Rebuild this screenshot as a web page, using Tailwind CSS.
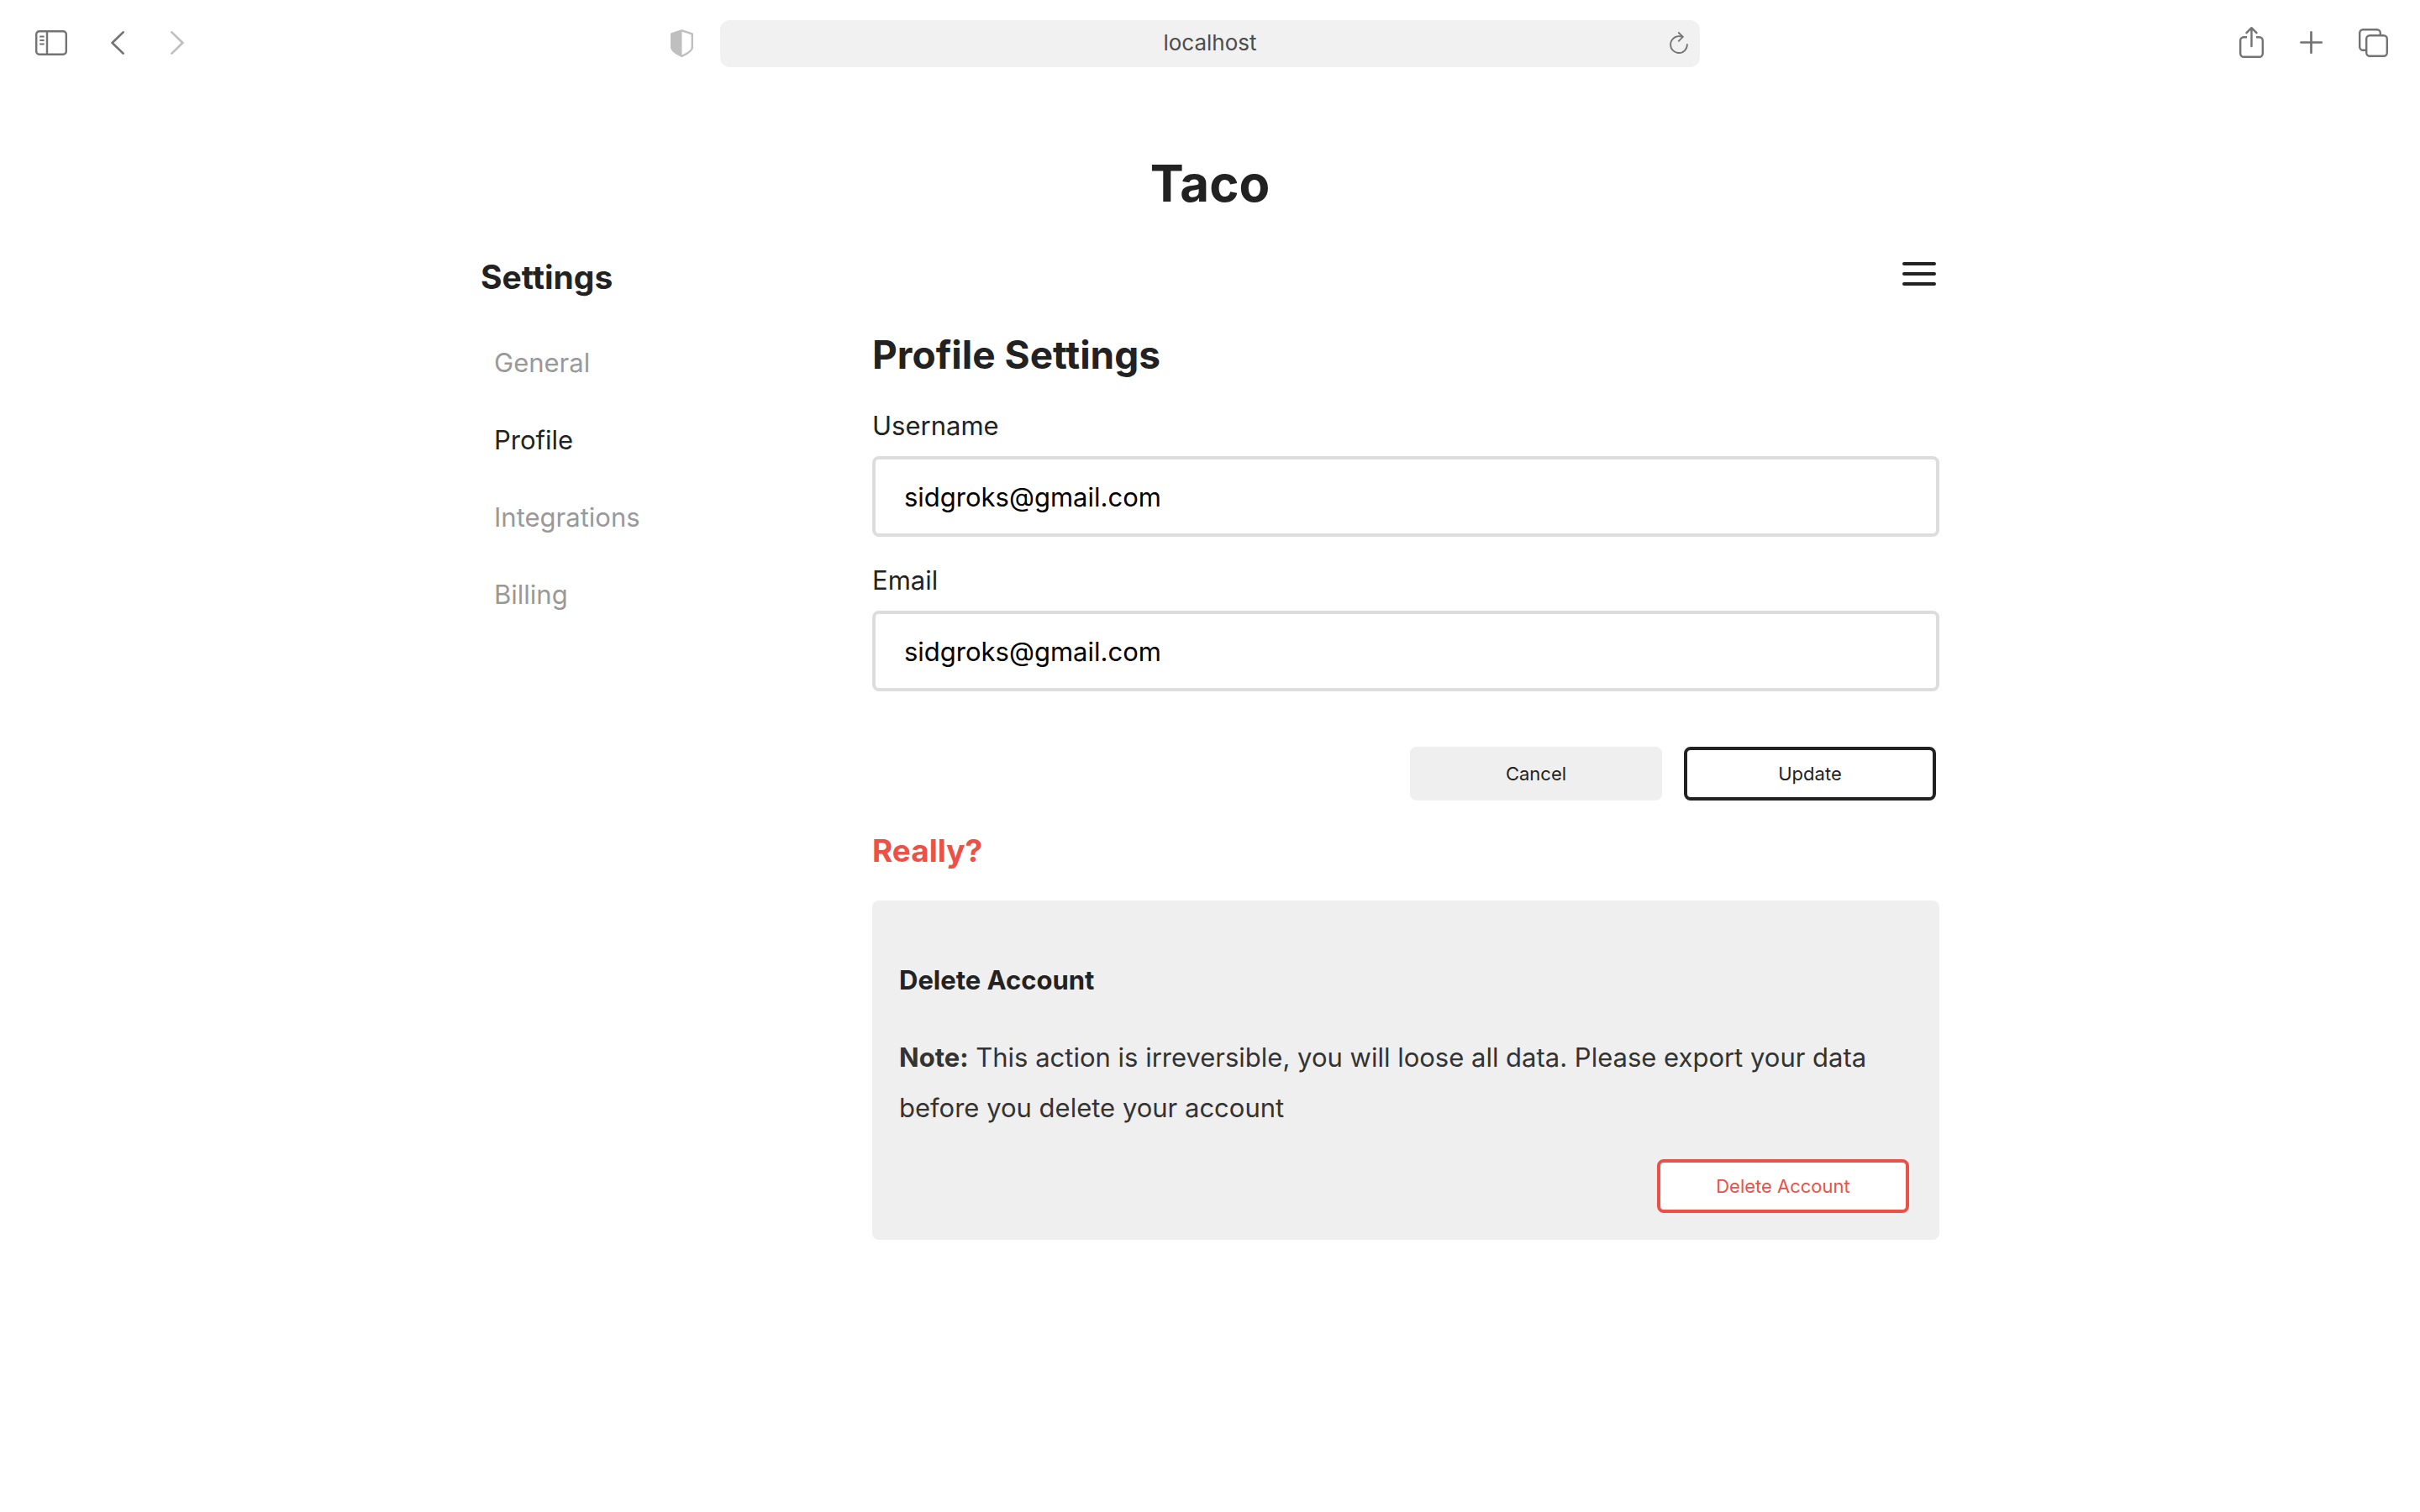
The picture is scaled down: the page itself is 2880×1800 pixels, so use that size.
<!DOCTYPE html>
<html lang="en">
<head>
<meta charset="utf-8">
<meta name="viewport" content="width=device-width, initial-scale=1">
<title>Taco – Profile Settings</title>
<script src="https://cdn.jsdelivr.net/npm/@tailwindcss/browser@4"></script>
</head>
<body class="min-h-screen bg-white font-['Inter',sans-serif] text-[#222222]">

<!-- Browser toolbar -->
<header class="grid grid-cols-[minmax(0,1fr)_40.5%_minmax(0,1fr)] items-center pt-6 text-[#737373]">
  <div class="flex items-center pr-8 pb-[2px] pl-[42px]">
    <button type="button" aria-label="Toggle sidebar">
      <svg class="block h-[30px] w-[38px]" viewBox="0 0 38 30" fill="none" stroke="currentColor" stroke-width="2.4" stroke-linecap="round">
        <rect x="1.2" y="1.2" width="35.6" height="27.6" rx="3.6"/>
        <path d="M14 1.5v27"/>
        <path d="M6 7.5h4M6 12h4M6 16.5h4" stroke-width="1.8"/>
      </svg>
    </button>
    <button type="button" aria-label="Back" class="ml-[52px]">
      <svg class="block h-7 w-4" viewBox="0 0 16 28" fill="none" stroke="currentColor" stroke-width="2.7" stroke-linecap="round" stroke-linejoin="round"><path d="M14.6 1.4 1.6 14l13 12.6"/></svg>
    </button>
    <button type="button" aria-label="Forward" class="ml-[55px] text-[#bfbfbf]">
      <svg class="block h-7 w-4" viewBox="0 0 16 28" fill="none" stroke="currentColor" stroke-width="2.7" stroke-linecap="round" stroke-linejoin="round"><path d="M1.4 1.4 14.4 14l-13 12.6"/></svg>
    </button>
    <button type="button" aria-label="Privacy report" class="ml-auto text-[#bfbfbf]">
      <svg class="block h-[33px] w-[27px]" viewBox="0 0 27 33" fill="none" stroke="currentColor" stroke-width="2.4" stroke-linejoin="round">
        <path d="M13.5 1.3 25.8 5.4v16.2c0 4.2-5.8 7.4-12.3 10.2C7 29 1.2 25.8 1.2 21.6V5.4z"/>
        <path d="M13.5 1.3v30.5C7 29 1.2 25.8 1.2 21.6V5.4z" fill="currentColor" stroke="none"/>
      </svg>
    </button>
  </div>
  <div class="grid h-14 grid-cols-[1fr_auto_1fr] items-center rounded-xl bg-[#f1f1f1] px-[14px] pb-[3px]">
    <span></span>
    <span class="text-[26px] leading-8 text-[#4c4c4c]">localhost</span>
    <button type="button" aria-label="Reload" class="justify-self-end">
      <svg class="block h-[26px] w-[22px]" viewBox="0 0 22 26" fill="none" stroke="currentColor" stroke-width="1.8" stroke-linecap="round" stroke-linejoin="round">
        <path d="M20.9 15A9.9 9.9 0 1 1 11 5.2c1.7 0 3.1.2 4.5.6"/>
        <path d="M10.8 1l5 4.9-5 5"/>
      </svg>
    </button>
  </div>
  <div class="flex items-center justify-end pr-[38px] pb-[2px]">
    <button type="button" aria-label="Share">
      <svg class="block h-[42px] w-[29px]" viewBox="0 0 29 42" fill="none" stroke="currentColor" stroke-width="2.4" stroke-linecap="round" stroke-linejoin="round">
        <path d="M9 14.2H5.2a4 4 0 0 0-4 4V33.8a4 4 0 0 0 4 4H23.8a4 4 0 0 0 4-4V18.2a4 4 0 0 0-4-4H20" stroke-linecap="butt"/>
        <path d="M14.5 25V3.5M8.500 9.2l6-6 6 6"/>
      </svg>
    </button>
    <button type="button" aria-label="New tab" class="ml-[43px]">
      <svg class="block h-[28px] w-[27px]" viewBox="0 0 27 28" fill="none" stroke="currentColor" stroke-width="2.7" stroke-linecap="round"><path d="M13.5 1.4v24.4M1.4 13.5h24.4"/></svg>
    </button>
    <button type="button" aria-label="Show tabs" class="ml-[43px]">
      <svg class="block h-[34px] w-[35px]" viewBox="0 0 35 34" fill="none" stroke="currentColor" stroke-width="2.4">
        <rect x="9.2" y="8.2" width="24.6" height="24.6" rx="4"/>
        <path d="M9 25.8H5.2a4 4 0 0 1-4-4V5.2a4 4 0 0 1 4-4H21.8a4 4 0 0 1 4 4V8"/>
      </svg>
    </button>
  </div>
</header>

<div class="mx-auto max-w-[1736px] pt-[100px]">
  <h1 class="text-center text-[60px] leading-[76px] font-bold">Taco</h1>

  <div class="mt-[50px] flex h-12 items-center justify-between">
    <h2 class="text-[39px] leading-[48px] font-bold">Settings</h2>
    <button type="button" aria-label="Menu" class="mr-1 mb-2">
      <svg class="block h-7 w-10" viewBox="0 0 40 28" stroke="#222" stroke-width="4" stroke-linecap="round"><path d="M2 2h36M2 14h36M2 26h36"/></svg>
    </button>
  </div>

  <div class="flex">
    <nav aria-label="Settings" class="w-[466px] pt-8 pl-4 text-[31px] leading-10 text-[#999999]">
      <a href="#general" class="block py-[26px]">General</a>
      <a href="#profile" aria-current="page" class="block py-[26px] text-[#222222]">Profile</a>
      <a href="#integrations" class="block py-[26px]">Integrations</a>
      <a href="#billing" class="block py-[26px]">Billing</a>
    </nav>

    <main class="min-w-0 flex-1 pt-10">
      <h2 class="text-[46px] leading-[56px] font-bold">Profile Settings</h2>
      <form>
        <label for="username" class="mt-[37px] mb-4 block text-[31px] leading-10">Username</label>
        <input id="username" type="text" value="sidgroks@gmail.com" class="block h-24 w-full rounded-lg border-4 border-[#dddddd] px-[34px] text-[31px] text-black">
        <label for="email" class="mt-8 mb-4 block text-[31px] leading-10">Email</label>
        <input id="email" type="email" value="sidgroks@gmail.com" class="block h-24 w-full rounded-lg border-4 border-[#dddddd] px-[34px] text-[31px] text-black">
        <div class="mt-[66px] flex justify-end gap-[26px] pr-1">
          <button type="button" class="h-16 w-[300px] rounded-lg bg-[#efefef] text-[22px]">Cancel</button>
          <button type="submit" class="h-16 w-[300px] rounded-lg border-4 border-[#222222] bg-white text-[22px]">Update</button>
        </div>
      </form>

      <h3 class="mt-9 mb-[35px] text-[37px] leading-[48px] font-bold text-[#ec5147]">Really?</h3>
      <section class="rounded-lg bg-[#efefef] px-8 pt-[75px] pb-8">
        <h4 class="text-[31px] leading-10 font-bold">Delete Account</h4>
        <p class="mt-[42px] text-[31px] leading-[60px] text-[#333333]"><strong>Note:</strong> This action is irreversible, you will loose all data. Please export your data before you delete your account</p>
        <div class="mt-[31px] flex justify-end pr-1">
          <button type="button" class="h-16 w-[300px] rounded-lg border-4 border-[#ec5147] bg-white text-[22px] text-[#ec5147]">Delete Account</button>
        </div>
      </section>
    </main>
  </div>
</div>
</body>
</html>
